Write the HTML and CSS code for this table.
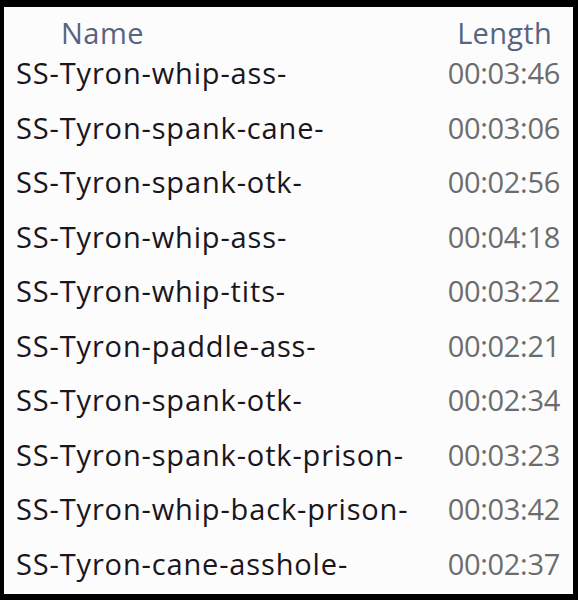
FILE: index.html
```html
<!DOCTYPE html>
<html>
<head>
<meta charset="utf-8">
<link rel="stylesheet" href="styles.css">
</head>
<body>
<div class="frame">
  <div class="list">
    <div class="head">
      <span class="h-name">Name</span>
      <span class="h-len">Length</span>
    </div>
    <div class="row"><span class="name">SS-Tyron-whip-ass-</span><span class="len">00:03:46</span></div>
    <div class="row"><span class="name">SS-Tyron-spank-cane-</span><span class="len">00:03:06</span></div>
    <div class="row"><span class="name">SS-Tyron-spank-otk-</span><span class="len">00:02:56</span></div>
    <div class="row"><span class="name">SS-Tyron-whip-ass-</span><span class="len">00:04:18</span></div>
    <div class="row"><span class="name">SS-Tyron-whip-tits-</span><span class="len">00:03:22</span></div>
    <div class="row"><span class="name">SS-Tyron-paddle-ass-</span><span class="len">00:02:21</span></div>
    <div class="row"><span class="name">SS-Tyron-spank-otk-</span><span class="len">00:02:34</span></div>
    <div class="row"><span class="name">SS-Tyron-spank-otk-prison-</span><span class="len">00:03:23</span></div>
    <div class="row"><span class="name">SS-Tyron-whip-back-prison-</span><span class="len">00:03:42</span></div>
    <div class="row"><span class="name">SS-Tyron-cane-asshole-</span><span class="len">00:02:37</span></div>
  </div>
</div>
</body>
</html>
```
FILE: styles.css
```css
html, body {
  margin: 0;
  padding: 0;
  background: #000;
}
.frame {
  width: 578px;
  height: 600px;
  box-sizing: border-box;
  padding: 7px 5px 6px 4px;
  background: #000;
}
.list {
  height: 100%;
  background: #fcfcfc;
  box-sizing: border-box;
  padding: 11px 13px 0 12px;
  font-family: "Open Sans", "Noto Sans", sans-serif;
  font-size: 29px;
  overflow: hidden;
}
.head {
  display: flex;
  justify-content: space-between;
  color: #56657e;
  height: 28px;
  line-height: 30px;
  padding: 0 0 0 45px;
}
.h-name { letter-spacing: 0.5px; }
.h-len { padding-right: 8px; letter-spacing: 0.3px; }
.row {
  display: flex;
  justify-content: space-between;
  height: 54.5px;
  line-height: 54.5px;
}
.name { color: #1a161c; letter-spacing: 0.85px; }
.len { color: #6c6c6c; letter-spacing: -0.3px; }
```
